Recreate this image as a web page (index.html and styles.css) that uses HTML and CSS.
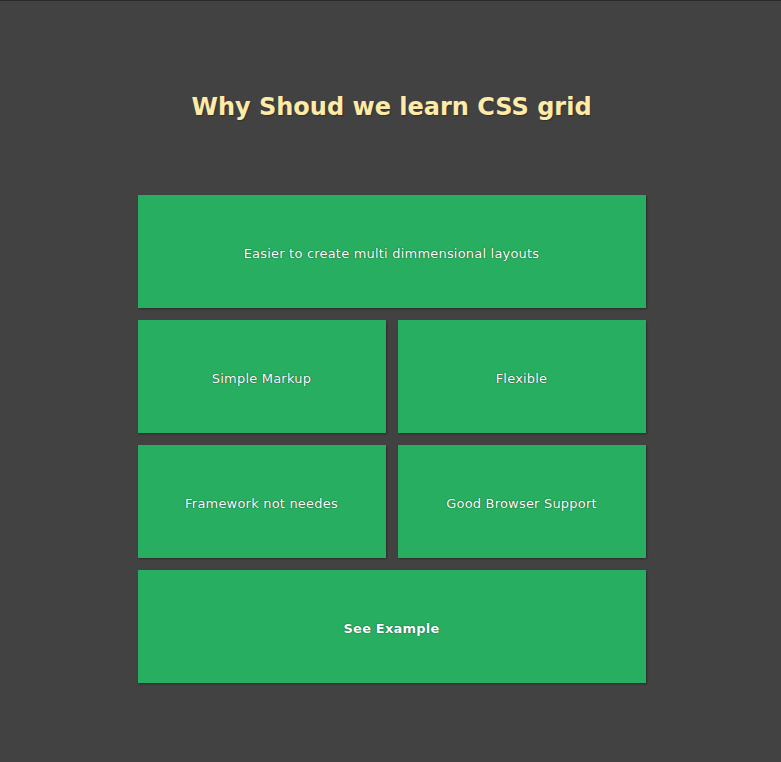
FILE: index.html
```html
<!DOCTYPE html>
<html>
<head>
<meta charset="utf-8">
<link rel="stylesheet" href="styles.css">
</head>
<body>
<div class="page">
  <h1 class="title">Why Shoud we learn CSS grid</h1>
  <div class="grid">
    <div class="cell wide">Easier to create multi dimmensional layouts</div>
    <div class="cell">Simple Markup</div>
    <div class="cell">Flexible</div>
    <div class="cell">Framework not needes</div>
    <div class="cell">Good Browser Support</div>
    <div class="cell wide strong">See Example</div>
  </div>
</div>
</body>
</html>
```
FILE: styles.css
```css
html, body {
  margin: 0;
  padding: 0;
  height: 100%;
}
body {
  background: #424242;
  border-top: 1px solid #2a2a2a;
  box-sizing: border-box;
  font-family: "DejaVu Sans", Verdana, sans-serif;
}
.page {
  display: flex;
  flex-direction: column;
  align-items: center;
}
.title {
  margin: 91px 0 0 0;
  font-size: 24px;
  line-height: 30px;
  font-weight: bold;
  color: #ffeaa7;
  text-shadow: 1px 1px 1px #2d3436;
  transform: translateX(1px);
}
.grid {
  margin-top: 73px;
  width: 508px;
  display: grid;
  grid-template-columns: 1fr 1fr;
  grid-auto-rows: 113px;
  gap: 12px;
  transform: translateX(1px);
}
.cell {
  background: #27ae60;
  display: flex;
  align-items: center;
  justify-content: center;
  padding-top: 3px;
  box-sizing: border-box;
  color: #ffffff;
  font-size: 13px;
  letter-spacing: 0.2px;
  text-shadow: 0 0 1px #14532d, 0 0 1px #14532d;
  box-shadow: 1px 1px 2px rgba(0, 0, 0, 0.35);
}
.wide {
  grid-column: 1 / 3;
}
.strong {
  font-weight: bold;
}
```
